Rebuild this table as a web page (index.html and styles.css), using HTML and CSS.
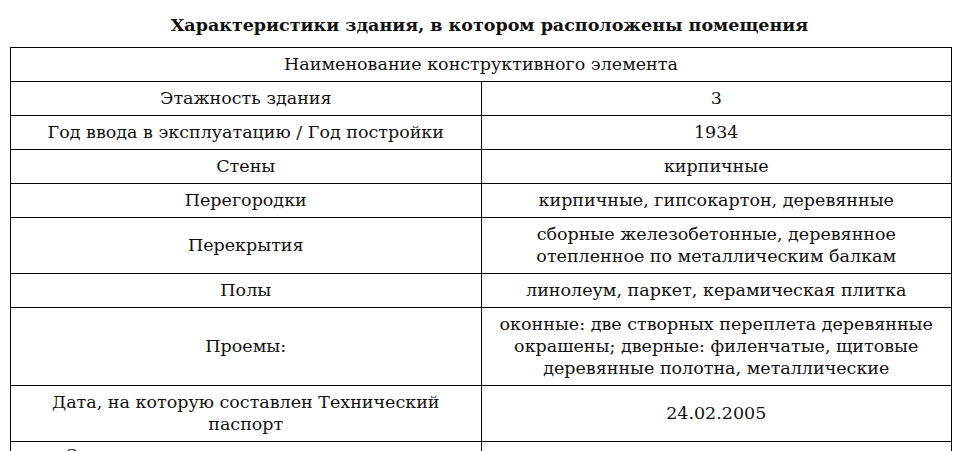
FILE: index.html
```html
<!DOCTYPE html>
<html lang="ru">
<head>
<meta charset="utf-8">
<link rel="stylesheet" href="styles.css">
</head>
<body>
<div class="page">
  <h1 class="title">Характеристики здания, в котором расположены помещения</h1>
  <table class="spec">
    <tr><td colspan="2" class="head">Наименование конструктивного элемента</td></tr>
    <tr><td>Этажность здания</td><td>3</td></tr>
    <tr><td>Год ввода в эксплуатацию / Год постройки</td><td>1934</td></tr>
    <tr><td>Стены</td><td>кирпичные</td></tr>
    <tr><td>Перегородки</td><td>кирпичные, гипсокартон, деревянные</td></tr>
    <tr><td>Перекрытия</td><td>сборные железобетонные, деревянное<br>отепленное по металлическим балкам</td></tr>
    <tr><td>Полы</td><td>линолеум, паркет, керамическая плитка</td></tr>
    <tr><td>Проемы:</td><td>оконные: две створных переплета деревянные<br>окрашены; дверные: филенчатые, щитовые<br>деревянные полотна, металлические</td></tr>
    <tr><td>Дата, на которую составлен Технический<br>паспорт</td><td>24.02.2005</td></tr>
    <tr class="last"><td>Заключение о техническом состоянии Технического<br>паспорта</td><td></td></tr>
  </table>
</div>
</body>
</html>
```
FILE: styles.css
```css
html, body {
  margin: 0;
  padding: 0;
  background: #fff;
}
body {
  font-family: "DejaVu Serif", "Liberation Serif", serif;
  color: #111;
  overflow: hidden;
  height: 451px;
}
.page {
  padding: 0 14px 0 10px;
}
.title {
  margin: 0;
  padding-top: 13px;
  height: 47px;
  box-sizing: border-box;
  font-size: 17.5px;
  font-weight: bold;
  text-align: center;
  line-height: 24px;
  padding-left: 18px;
}
.spec {
  width: 942px;
  border-collapse: collapse;
  table-layout: fixed;
}
.spec td {
  border: 1px solid #000;
  text-align: center;
  vertical-align: middle;
  font-size: 17.5px;
  line-height: 22px;
  padding: 5px 4px 6px;
}
.spec td:first-child {
  width: 462px;
}
.spec td.head {
  width: auto;
}
.spec .last td {
  vertical-align: top;
  padding-top: 2px;
}
```
